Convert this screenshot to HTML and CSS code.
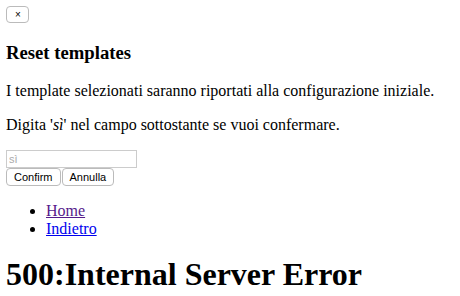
FILE: index.html
```html
<!DOCTYPE html>
<html lang="it">
<head>
  <meta charset="UTF-8">
  <title>500</title>
  <link rel="stylesheet" href="styles.css">
</head>
<body>
  <div class="modal">
    <button class="close">×</button>
    <h3>Reset templates</h3>
    <p>I template selezionati saranno riportati alla configurazione iniziale.</p>
    <p>Digita '<i>sì</i>' nel campo sottostante se vuoi confermare.</p>
    <form class="confirm">
      <input type="text" placeholder="sì">
      <div class="actions">
        <button type="button">Confirm</button><button type="button">Annulla</button>
      </div>
    </form>
  </div>
  <ul class="nav">
    <li><a class="visited" href="#">Home</a></li>
    <li><a href="#">Indietro</a></li>
  </ul>
  <h1>500:Internal Server Error</h1>
</body>
</html>
```

FILE: styles.css
```css
body {
  font-family: 'Liberation Serif', serif;
  font-size: 16px;
  margin: 6px;
  color: #000;
  background: #fff;
}
h3 { font-size: 18.7px; margin: 18px 0; }
p { margin: 16px 0; }
button {
  font-family: 'Liberation Sans', sans-serif;
  font-size: 11px;
  line-height: 14px;
  background: #fff;
  border: 1px solid #bbb;
  border-radius: 4px;
  padding: 1px 7px;
  margin: 0;
  color: #000;
  box-sizing: border-box;
  height: 18px;
  vertical-align: top;
}
.close { font-size: 10px; padding: 0 8px; height: 17px; width: 23px; }
.confirm input {
  display: block;
  box-sizing: border-box;
  font-family: 'Liberation Sans', sans-serif;
  font-size: 11px;
  width: 131px;
  height: 18px;
  padding: 1px 2px;
  border: 1px solid #ccc;
  margin: 0;
}
.confirm input::placeholder { color: #aaa; }
.actions { display: flex; gap: 1px; }
.nav { margin: 16px 0; padding-left: 40px; }
a { color: #00e; }
a.visited { color: #551a8b; }
h1 { font-size: 32px; margin: 18px 0; }
```
